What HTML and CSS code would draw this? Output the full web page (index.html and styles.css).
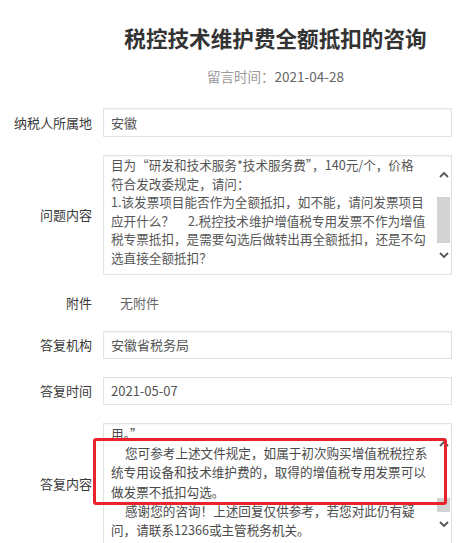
FILE: index.html
```html
<!DOCTYPE html>
<html lang="zh-CN">

<head>
    <meta charset="UTF-8">
    <meta name="viewport" content="width=device-width, initial-scale=1.0">
    <title>税控技术维护费全额抵扣的咨询</title>
    <link rel="stylesheet" href="styles.css">
</head>

<body>
    <div class="page">
        <div class="head">
            <h1 class="title">税控技术维护费全额抵扣的咨询</h1>
            <p class="time"><span class="timeLabel">留言时间：</span>2021-04-28</p>
        </div>

        <div class="form">
            <div class="row">
                <label class="label">纳税人所属地</label>
                <div class="field">安徽</div>
            </div>

            <div class="row">
                <label class="label">问题内容</label>
                <div class="field area areaQuestion">
                    <div class="areaText">
                        <p>目为“研发和技术服务*技术服务费”，140元/个，价格</p>
                        <p>符合发改委规定，请问：</p>
                        <p>1.该发票项目能否作为全额抵扣，如不能，请问发票项目</p>
                        <p>应开什么？     2.税控技术维护增值税专用发票不作为增值</p>
                        <p>税专票抵扣，是需要勾选后做转出再全额抵扣，还是不勾</p>
                        <p>选直接全额抵扣？</p>
                    </div>
                    <div class="scrollbar">
                        <span class="arrow">
                            <svg width="10" height="7" viewBox="0 0 10 7"><polyline points="1,6 5,2 9,6" /></svg>
                        </span>
                        <span class="track"><span class="thumb thumbQuestion"></span></span>
                        <span class="arrow">
                            <svg width="10" height="7" viewBox="0 0 10 7"><polyline points="1,1 5,5 9,1" /></svg>
                        </span>
                    </div>
                </div>
            </div>

            <div class="row rowPlain">
                <label class="label">附件</label>
                <div class="plain">无附件</div>
            </div>

            <div class="row">
                <label class="label">答复机构</label>
                <div class="field fieldSmall">安徽省税务局</div>
            </div>

            <div class="row">
                <label class="label">答复时间</label>
                <div class="field fieldSmall">2021-05-07</div>
            </div>

            <div class="row">
                <label class="label">答复内容</label>
                <div class="field area areaAnswer">
                    <div class="areaText answerText">
                        <p>用。”</p>
                        <p class="indent">您可参考上述文件规定，如属于初次购买增值税税控系</p>
                        <p>统专用设备和技术维护费的，取得的增值税专用发票可以</p>
                        <p>做发票不抵扣勾选。</p>
                        <p class="indent">感谢您的咨询！上述回复仅供参考，若您对此仍有疑</p>
                        <p>问，请联系12366或主管税务机关。</p>
                    </div>
                    <div class="scrollbar scrollAnswer">
                        <span class="arrow">
                            <svg width="10" height="7" viewBox="0 0 10 7"><polyline points="1,6 5,2 9,6" /></svg>
                        </span>
                        <span class="track"><span class="thumb thumbAnswer"></span></span>
                        <span class="arrow">
                            <svg width="10" height="7" viewBox="0 0 10 7"><polyline points="1,1 5,5 9,1" /></svg>
                        </span>
                    </div>
                    <!-- marca vermelha por cima do texto -->
                    <div class="mark"></div>
                </div>
            </div>
        </div>
    </div>
</body>

</html>
```

FILE: styles.css
```css
:root {
    --textColor: #3a3a3a;
    --fieldText: #555555;
    --borderColor: #e2e2e2;
    --markColor: #e8232b;
}

body {
    margin: 0;
    background-color: #ffffff;
    color: var(--textColor);
    font-family: "Noto Sans CJK SC", "Noto Sans", sans-serif;
    font-size: 13px;
}

.page {
    width: 466px;
    height: 543px;
    overflow: hidden;
}

.head {
    margin-left: 101px;
    width: 349px;
    padding-top: 23px;
    text-align: center;
}

.title {
    margin: 0;
    font-size: 21.6px;
    line-height: 30px;
    font-weight: bold;
    color: #333333;
}

.time {
    margin: 13px 0 0;
    font-size: 13.5px;
    line-height: 20px;
    color: #666666;
}

.timeLabel {
    color: #9a9a9a;
}

.form {
    display: flex;
    flex-direction: column;
    gap: 18px;
    margin-top: 22px;
}

.row {
    display: grid;
    grid-template-columns: 92px 349px;
    column-gap: 11px;
    align-items: center;
}

.label {
    text-align: right;
    white-space: nowrap;
    line-height: 20px;
}

.field {
    box-sizing: border-box;
    height: 29px;
    padding: 0 7px;
    border: 1px solid var(--borderColor);
    box-shadow: inset 0 1px 2px rgba(0, 0, 0, 0.04);
    color: var(--fieldText);
    line-height: 27px;
}

.fieldSmall {
    height: 28px;
    line-height: 26px;
}

.rowPlain {
    height: 20px;
}

.plain {
    padding-left: 17px;
    color: #666666;
    line-height: 20px;
}

.area {
    position: relative;
    display: flex;
    padding: 0 0 0 7px;
}

.areaQuestion {
    height: 120px;
}

.areaAnswer {
    height: 122px;
}

.areaText {
    flex: 1;
    overflow: hidden;
    font-size: 12.6px;
    line-height: 18.6px;
}

.areaText p {
    margin: 0;
    white-space: pre;
}

.answerText {
    line-height: 19.2px;
    color: #4a4a4a;
}

.answerText p:first-child {
    margin-top: 0;
}

.indent {
    text-indent: 14px;
}

.scrollbar {
    display: flex;
    flex-direction: column;
    width: 15px;
    margin: 10px 0;
}

.scrollAnswer {
    margin: 11px 0;
}

.arrow {
    display: flex;
    align-items: center;
    justify-content: center;
    height: 17px;
}

.arrow polyline {
    fill: none;
    stroke: #555555;
    stroke-width: 1.8;
}

.track {
    flex: 1;
}

.thumb {
    display: block;
    margin: 0 1px;
    background-color: #d3d3d3;
}

.thumbQuestion {
    margin-top: 14px;
    height: 46px;
}

.thumbAnswer {
    margin-top: 46px;
    height: 14px;
}

.mark {
    position: absolute;
    left: -11px;
    top: 14px;
    width: 354px;
    height: 67px;
    box-sizing: border-box;
    border: 3px solid var(--markColor);
    border-radius: 3px;
}
```
